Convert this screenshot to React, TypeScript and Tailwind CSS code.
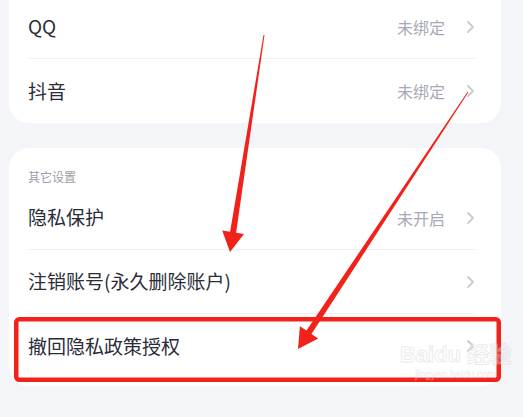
import React from 'react';

interface Row {
  label: string;
  value?: string;
}

const accountRows: Row[] = [
  { label: 'QQ', value: '未绑定' },
  { label: '抖音', value: '未绑定' },
];

const otherRows: Row[] = [
  { label: '隐私保护', value: '未开启' },
  { label: '注销账号(永久删除账户)' },
  { label: '撤回隐私政策授权' },
];

const Chevron: React.FC = () => (
  <svg width="9" height="14" viewBox="0 0 9 14" fill="none" className="shrink-0">
    <path d="M2 2l5 5-5 5" stroke="#cacbd1" strokeWidth="1.8" strokeLinecap="round" strokeLinejoin="round" />
  </svg>
);

const SettingRow: React.FC<{ row: Row; last?: boolean }> = ({ row, last }) => (
  <div className={`flex h-16 items-center ${last ? '' : 'border-b border-[#eff0f3]'}`}>
    <span className="flex-1 text-[19px] text-[#2a2d38]">{row.label}</span>
    {row.value && <span className="mr-[21px] text-[16px] text-[#a7a9b6]">{row.value}</span>}
    <Chevron />
  </div>
);

const App: React.FC = () => {
  return (
    <div
      className="relative h-[417px] w-[523px] overflow-hidden bg-[#f4f5f9]"
      style={{ fontFamily: '"Noto Sans CJK SC", "Noto Sans", sans-serif' }}
    >
      <div className="flex flex-col gap-[25px] pl-[9px] pr-[22px]">
        {/* account binding card */}
        <div className="-mt-[5px] rounded-b-[20px] bg-white pl-[19px] pr-[26px]">
          {accountRows.map((row, i) => (
            <SettingRow key={row.label} row={row} last={i === accountRows.length - 1} />
          ))}
        </div>

        {/* other settings card */}
        <div className="rounded-[20px] bg-white pb-2 pl-[19px] pr-[26px] pt-5">
          <div className="text-[12px] leading-[18px] text-[#9c9ea7]">其它设置</div>
          {otherRows.map((row, i) => (
            <SettingRow key={row.label} row={row} last={i === otherRows.length - 1} />
          ))}
        </div>
      </div>

      {/* annotation overlay */}
      <svg className="pointer-events-none absolute left-0 top-0" width="523" height="417" viewBox="0 0 523 417">
        <rect x="16.25" y="319.25" width="482.5" height="60.5" rx="3" fill="none" stroke="#f2221a" strokeWidth="4.5" />
        <polygon
          points="264.5,35.1 263.5,34.9 230.1,231.7 222.2,230.5 230,252 244,233.9 236.1,232.7"
          fill="#f2221a"
        />
        <polygon
          points="468.4,92.3 467.6,91.7 306.5,330.6 299.9,326.2 298,349 318.2,338.4 311.5,334"
          fill="#f2221a"
        />
      </svg>

      {/* watermark */}
      <div className="pointer-events-none absolute left-[400px] top-[344px] flex flex-col items-center leading-none opacity-40">
        <span className="text-[22px] font-bold text-white [-webkit-text-stroke:1px_#cfd0d6]" style={{ fontFamily: '"Liberation Sans", "Noto Sans CJK SC", sans-serif' }}>
          Baidu 经验
        </span>
        <span className="mt-[4px] text-[10px] text-white [-webkit-text-stroke:0.5px_#cfd0d6]" style={{ fontFamily: '"Liberation Sans", sans-serif' }}>
          jingyan.baidu.com
        </span>
      </div>
    </div>
  );
};

export default App;
